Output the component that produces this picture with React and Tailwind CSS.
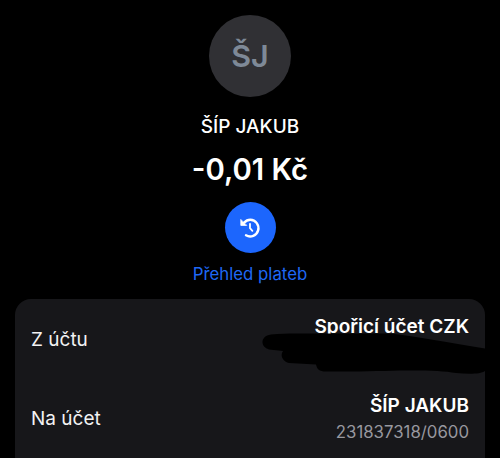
const CARD_ROWS = [
  { label: "Z účtu", name: "Spořicí účet CZK", redacted: true },
  { label: "Na účet", name: "ŠÍP JAKUB", account: "231837318/0600" },
];

export default function App() {
  return (
    <div className="h-[458px] w-[500px] overflow-hidden bg-black font-['Inter',sans-serif] text-white">
      <Summary />
      <main className="mx-[15px] h-[180px] rounded-2xl bg-[#17171a]">
        {CARD_ROWS.map((row) => (
          <AccountRow key={row.label} {...row} />
        ))}
      </main>
    </div>
  );
}

function Summary() {
  return (
    <header className="flex h-[299px] flex-col items-center pt-[15px]">
      <div className="flex size-[82px] shrink-0 items-center justify-center rounded-full bg-[#303034] text-[30.5px] font-semibold text-[#7e8997]">
        ŠJ
      </div>
      <h1 className="mt-[18px] text-[19px] leading-6 font-medium">
        ŠÍP JAKUB
      </h1>
      <p className="mt-[13px] text-[29.3px] leading-9 font-semibold">
        -0,01 Kč
      </p>
      <button className="mt-[14px] flex size-[51px] shrink-0 items-center justify-center rounded-full bg-[#1c66fd]">
        <HistoryIcon />
      </button>
      <p className="mt-[10px] text-[16.8px] leading-[22px] text-[#1f68f5]">
        Přehled plateb
      </p>
    </header>
  );
}

function AccountRow({ label, name, account, redacted }) {
  return (
    <div className="relative flex h-[79.5px] items-center justify-between px-4 pt-0.5">
      <span className="text-[19px] leading-6 text-[#f2f2f3]">{label}</span>
      <div className="text-right">
        <p className="text-[19px] leading-[26px] font-semibold">{name}</p>
        <p className="h-[26px] text-[16.8px] leading-[26px] text-[#98989f]">
          {account}
        </p>
      </div>
      {redacted && <Redaction />}
    </div>
  );
}

// Marker stroke that hides the account number
function Redaction() {
  return (
    <svg
      className="absolute top-[33px] right-0 h-[42px] w-[224px]"
      viewBox="0 0 224 42"
      aria-hidden="true"
    >
      <path
        d="M10 2.500C24 1 38 1.500 54 1.500H128C153 3.500 187 11 224 16.500V39C219 42.500 206 42 195 41C174 37 137 38.500 90 39.500H65C58 39.500 56 37 55 32.500L28 31C21 29 19 23 22 19L8 17.500C-1 15 -1 4 10 2.500Z"
        fill="#000"
      />
    </svg>
  );
}

function HistoryIcon() {
  return (
    <svg
      className="size-6"
      viewBox="0 0 24 24"
      fill="none"
      stroke="currentColor"
      strokeWidth={2.4}
      strokeLinecap="round"
      aria-hidden="true"
    >
      <path d="M6 6.800C7.800 4.800 9.800 3.800 12.300 3.800A8.300 8.300 0 1 1 8 19.300" />
      <path
        d="M2.800 3.800V9.400H8.400Z"
        fill="currentColor"
        strokeWidth={0.8}
        strokeLinejoin="round"
      />
      <path d="M12 7.800V12.200L14.400 14.800" strokeWidth={1.8} strokeLinejoin="round" />
    </svg>
  );
}
